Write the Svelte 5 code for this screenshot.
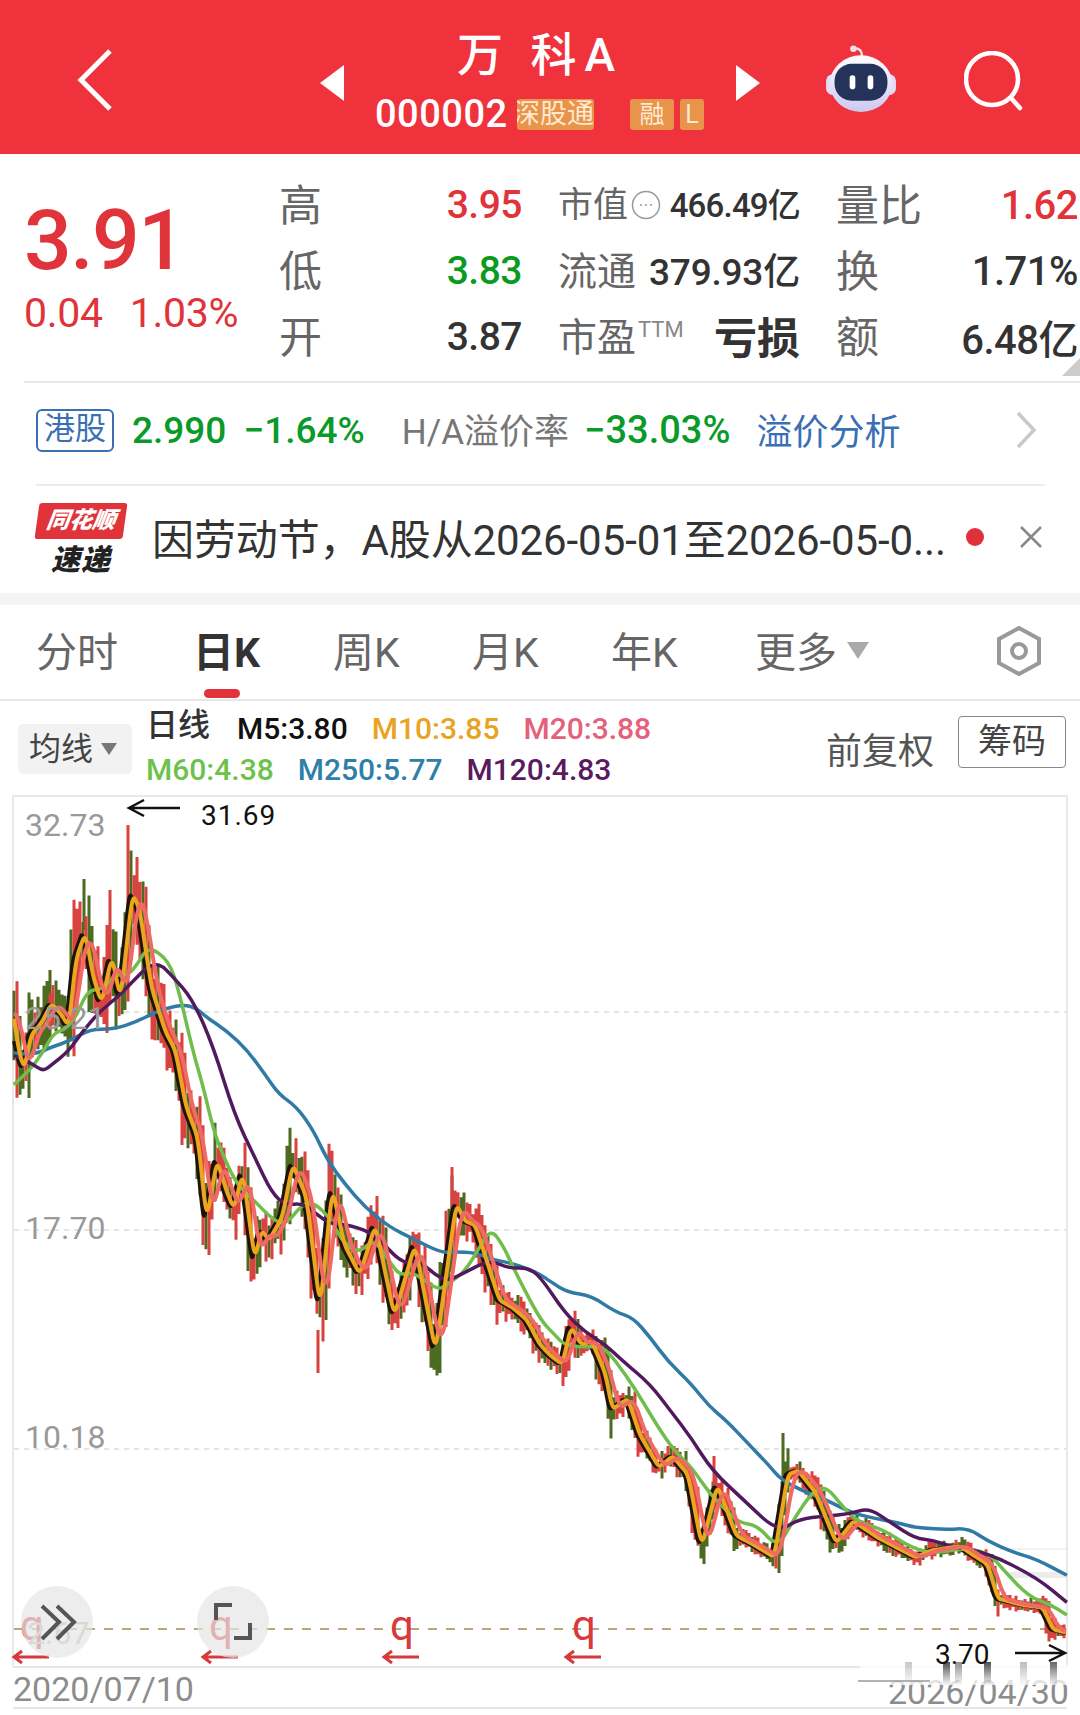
<script>
	// traced from the reference: left half and right half have their own scales
	const left = ([x, y]) => [x / 2.904, 790 + y / 2.529];
	const right = ([x, y]) => [540 + x / 2.904, 1150 + y / 2.775];
	const join = (a, b) => [...a.map(left), ...b.map(right)];

	const blue = join(
		[[40,665],[90,672],[150,650],[210,632],[260,605],[330,605],[400,585],[450,562],[520,543],[565,548],[600,575],[660,610],[720,660],[770,720],[810,770],[860,800],[910,860],[950,935],[1000,995],[1060,1055],[1130,1105],[1200,1135],[1280,1170],[1320,1168],[1380,1170],[1420,1185],[1490,1198],[1530,1210]],
		[[0,345],[30,365],[80,395],[150,405],[220,450],[270,465],[320,520],[370,585],[440,650],[490,710],[540,750],[600,810],[660,870],[700,915],[760,945],[830,970],[900,1005],[960,1020],[1040,1035],[1090,1048],[1180,1053],[1245,1050],[1300,1085],[1370,1115],[1440,1135],[1530,1180]]
	);
	const green = join(
		[[40,745],[80,715],[120,670],[155,615],[190,605],[220,575],[255,505],[300,505],[335,465],[370,470],[400,440],[430,395],[490,430],[520,510],[560,660],[590,750],[620,860],[650,930],[690,1000],[740,1040],[790,1085],[830,1100],[880,1045],[915,1045],[960,1085],[1000,1150],[1045,1170],[1085,1135],[1130,1190],[1160,1228],[1200,1218],[1270,1265],[1300,1250],[1350,1218],[1390,1160],[1425,1110],[1460,1150],[1500,1225]],
		[[0,470],[40,510],[75,545],[150,545],[190,550],[250,625],[300,700],[340,765],[390,835],[440,880],[490,950],[540,1000],[580,1035],[630,1040],[690,1105],[740,1020],[790,950],[830,932],[880,990],[920,1030],[1000,1055],[1080,1105],[1150,1120],[1220,1105],[1300,1115],[1350,1170],[1420,1240],[1480,1260],[1530,1290]]
	);
	const purple = join(
		[[40,672],[90,690],[125,712],[150,695],[200,660],[240,610],[290,560],[340,525],[390,480],[430,445],[465,440],[500,470],[560,530],[620,650],[680,820],[740,930],[790,1020],[830,1050],[880,1045],[930,1080],[960,1097],[1020,1100],[1090,1125],[1170,1200],[1210,1185],[1290,1245],[1340,1225],[1420,1188],[1480,1210],[1530,1208]],
		[[0,350],[70,450],[130,505],[190,540],[240,585],[320,650],[380,725],[440,800],[500,890],[590,970],[690,1060],[750,1025],[830,1015],[900,1010],[955,993],[1020,1035],[1090,1078],[1140,1082],[1190,1100],[1300,1118],[1440,1185],[1530,1255]]
	);
	const price = join(
		[[40,560],[50,640],[70,710],[90,620],[120,590],[150,540],[180,570],[200,600],[220,430],[248,360],[270,470],[295,540],[325,420],[350,530],[385,260],[405,300],[440,500],[480,610],[510,660],[540,800],[575,880],[600,1090],[630,935],[660,1020],[680,1060],[705,965],[740,1190],[760,1110],[780,1140],[820,1080],[850,945],[890,1030],[930,1310],[965,1005],[1000,1150],[1045,1225],[1090,1100],[1145,1330],[1205,1150],[1265,1420],[1325,1045],[1350,1090],[1380,1100],[1450,1290],[1490,1310],[1530,1340]],
		[[0,540],[30,570],[65,595],[90,490],[120,540],[150,530],[190,620],[210,720],[255,690],[290,790],[345,880],[385,850],[430,900],[470,1100],[515,930],[570,1070],[620,1095],[680,1130],[720,900],[750,890],[800,950],[860,1090],[910,1030],[980,1075],[1090,1130],[1140,1110],[1220,1100],[1300,1150],[1330,1245],[1400,1262],[1460,1270],[1490,1330],[1530,1340]]
	);

	const smooth = (pts) => {
		let d = `M${pts[0][0].toFixed(1)} ${pts[0][1].toFixed(1)}`;
		for (let i = 1; i < pts.length - 1; i++) {
			const mx = (pts[i][0] + pts[i + 1][0]) / 2;
			const my = (pts[i][1] + pts[i + 1][1]) / 2;
			d += `Q${pts[i][0].toFixed(1)} ${pts[i][1].toFixed(1)} ${mx.toFixed(1)} ${my.toFixed(1)}`;
		}
		const end = pts[pts.length - 1];
		return d + `L${end[0].toFixed(1)} ${end[1].toFixed(1)}`;
	};

	// price y for every pixel column
	const series = [];
	for (let x = 14, i = 0; x <= 1066; x++) {
		while (i < price.length - 2 && price[i + 1][0] < x) i++;
		const [x0, y0] = price[i];
		const [x1, y1] = price[i + 1];
		series.push([x, y0 + ((y1 - y0) * (x - x0)) / (x1 - x0 || 1)]);
	}
	const at = (i) => series[Math.max(0, Math.min(series.length - 1, i))][1];
	const average = (lag, size) => {
		const out = [];
		for (let i = 0; i < series.length; i += 2) {
			let sum = 0;
			for (let k = -size; k <= size; k++) sum += at(i - lag + k);
			out.push([series[i][0], sum / (size * 2 + 1)]);
		}
		return out;
	};
	const m5 = smooth(average(-3, 0));
	const m10 = smooth(average(0, 2));
	const m20 = smooth(average(6, 5));

	const noise = (n) => {
		const v = Math.sin(n * 127.1) * 43758.5453;
		return v - Math.floor(v);
	};
	let redBars = '';
	let greenBars = '';
	for (let i = 0; i < series.length; i += 3) {
		const [x, y] = series[i];
		const slope = Math.abs(at(i + 3) - at(i - 3));
		const amp = 5 + Math.max(0, 1500 - y) / 45 + slope * 0.8;
		const up = amp * (0.6 + noise(i) * 0.9);
		const down = amp * (0.6 + noise(i + 0.5) * 0.9);
		const bar = `M${x} ${(y - up).toFixed(1)}V${(y + down).toFixed(1)}`;
		if (noise(i + 0.25) > 0.4) redBars += bar;
		else greenBars += bar;
	}
	// the tall wicks that stand out in the picture
	const redSpikes = [[128,825,900],[137,857,930],[110,890,960],[318,1330,1373],[452,1167,1240],[714,1456,1510]];
	const greenSpikes = [[84,879,930],[783,1433,1490],[50,970,1040]];
	for (const [x, a, b] of redSpikes) redBars += `M${x} ${a}V${b}`;
	for (const [x, a, b] of greenSpikes) greenBars += `M${x} ${a}V${b}`;

	const lines = [
		{ d: smooth(blue), color: '#2f7ba6', width: 3.5 },
		{ d: smooth(green), color: '#6fbe4b', width: 3.5 },
		{ d: smooth(purple), color: '#521a5e', width: 3.5 }
	];

	const scale = [
		{ text: '32.73', y: 836 },
		{ text: '25.21', y: 1029 },
		{ text: '17.70', y: 1239 },
		{ text: '10.18', y: 1448 }
	];
	const gridY = [1012, 1230, 1449];
	const marks = [13, 202, 383, 565];
	const streaks = [[943, 0.8], [955, 0.5], [984, 0.8], [1050, 0.7], [905, 0.25], [1020, 0.3]];

	const quotes = [
		{ k: '高', v: '3.95', tone: 'up', mid: '市值', midV: '466.49亿', coin: true, r: '量比', rv: '1.62', rtone: 'up' },
		{ k: '低', v: '3.83', tone: 'down', mid: '流通', midV: '379.93亿', r: '换', rv: '1.71%' },
		{ k: '开', v: '3.87', tone: '', mid: '市盈', midV: '亏损', ttm: true, r: '额', rv: '6.48亿' }
	];
	const tabs = ['分时', '日K', '周K', '月K', '年K'];
</script>

<div class="page">
	<header class="top">
		<svg class="back" viewBox="0 0 36 64"><path d="M33 3 4 32l29 29" /></svg>
		<div class="title-wrap">
			<i class="tri tri-l"></i>
			<div class="title">
				<div class="name">万 科A</div>
				<div class="code-row">
					<span class="code">000002</span>
					<span class="tag tag-clip"><span>深股通</span></span>
					<span class="tag tag-rong">融</span>
					<span class="tag tag-l">L</span>
				</div>
			</div>
			<i class="tri tri-r"></i>
		</div>
		<svg class="robot" viewBox="0 0 76 72">
			<defs>
				<linearGradient id="shell" x1="0" y1="0" x2="0" y2="1">
					<stop offset="0" stop-color="#fff" />
					<stop offset="1" stop-color="#cdc8f2" />
				</linearGradient>
			</defs>
			<circle cx="30" cy="5" r="3.500" fill="#f6dfe6" />
			<path d="M30 5c5-1 9 1 9 8" fill="none" stroke="#f6dfe6" stroke-width="2.500" />
			<rect x="1" y="32" width="74" height="22" rx="7" fill="#e3dcf5" />
			<ellipse cx="38" cy="42" rx="33" ry="30" fill="url(#shell)" />
			<rect x="10" y="21" width="56" height="39" rx="18" fill="#25325a" />
			<rect x="26" y="33" width="6" height="15" rx="3" fill="#fff" />
			<rect x="45" y="33" width="6" height="15" rx="3" fill="#fff" />
		</svg>
		<svg class="search" viewBox="0 0 60 60"><circle cx="28" cy="28" r="26" /><path d="M47 47l9 10" /></svg>
	</header>

	<section class="quote">
		<div class="last">
			<div class="last-num">3.91</div>
			<div class="last-chg"><span>0.04</span><span>1.03%</span></div>
		</div>
		<div class="grid">
			{#each quotes as row}
				<span class="k">{row.k}</span>
				<span class="v {row.tone}">{row.v}</span>
				<span class="mid">
					<span class="mk" class:small={row.coin}>{row.mid}</span>
					{#if row.coin}
						<svg class="coin" viewBox="0 0 30 30"><circle cx="15" cy="15" r="13.500" /><path d="M9 15h2M14 15h2M19 15h2" /></svg>
					{/if}
					{#if row.ttm}<sup>TTM</sup>{/if}
					<span class="mv" class:loss={row.ttm} class:tight={row.coin}>{row.midV}</span>
				</span>
				<span class="k">{row.r}</span>
				<span class="v r {row.rtone || ''}">{row.rv}</span>
			{/each}
		</div>
		<i class="corner"></i>
	</section>

	<section class="hk">
		<span class="hk-tag">港股</span>
		<span class="hk-num">2.990</span>
		<span class="hk-num hk-pct">−1.64%</span>
		<span class="hk-rate">H/A溢价率</span>
		<span class="hk-num hk-prem">−33.03%</span>
		<span class="hk-link">溢价分析</span>
		<svg class="hk-more" viewBox="0 0 22 40"><path d="M3 3l16 17L3 37" /></svg>
	</section>

	<section class="news">
		<div class="logo">
			<div class="logo-top">同花顺</div>
			<div class="logo-bottom">速递</div>
		</div>
		<div class="news-text">因劳动节，A股从2026-05-01至2026-05-0...</div>
		<i class="dot"></i>
		<svg class="close" viewBox="0 0 24 24"><path d="M2 2l20 20M22 2 2 22" /></svg>
	</section>

	<nav class="tabs">
		{#each tabs as tab, i}
			<span class="tab" class:active={i === 1}>{tab}</span>
		{/each}
		<span class="tab more">更多<i class="caret"></i></span>
		<svg class="hex" viewBox="0 0 48 52"><path d="M24 3 44 14v24L24 49 4 38V14z" /><circle cx="24" cy="26" r="7" /></svg>
	</nav>

	<section class="legend">
		<div class="ma-btn">均线<i class="caret small"></i></div>
		<div class="ma">
			<div class="ma-row">
				<span class="ma-name">日线</span>
				<span class="c-m5">M5:3.80</span>
				<span class="c-m10">M10:3.85</span>
				<span class="c-m20">M20:3.88</span>
			</div>
			<div class="ma-row second">
				<span class="c-m60">M60:4.38</span>
				<span class="c-m250">M250:5.77</span>
				<span class="c-m120">M120:4.83</span>
			</div>
		</div>
		<span class="adjust">前复权</span>
		<span class="chips">筹码</span>
	</section>

	<section class="chart">
		<svg class="plot" viewBox="0 795 1080 920">
			<defs>
				<linearGradient id="streak" x1="0" y1="0" x2="0" y2="1">
					<stop offset="0" stop-color="#222" />
					<stop offset="1" stop-color="#222" stop-opacity="0" />
				</linearGradient>
			</defs>
			<path d="M13 1667V796H1067V1667" fill="none" stroke="#e8e8e8" stroke-width="2" />
			<path d="M13 1667H1067M13 1708H1067" fill="none" stroke="#e6e6e6" stroke-width="2" />
			{#each gridY as y}
				<line x1="14" x2="1066" y1={y} y2={y} class="grid-line" />
			{/each}
			<path d="M1000 1549H1066" stroke="#e6e6e6" stroke-width="1" />
			<path d="M1008 1575H1066" stroke="#ececec" stroke-width="6" />
			<line x1="14" x2="1066" y1="1629" y2="1629" class="last-line" />

			<path d={greenBars} stroke="#4c6b20" stroke-width="3" fill="none" />
			<path d={redBars} stroke="#d9433f" stroke-width="3" fill="none" />
			<path d={m5} stroke="#1c1408" stroke-width="4" fill="none" />
			{#each lines as line}
				<path d={line.d} stroke={line.color} stroke-width={line.width} fill="none" stroke-linejoin="round" />
			{/each}
			<path d={m10} stroke="#eca51f" stroke-width="4" fill="none" stroke-linejoin="round" />
			<path d={m20} stroke="#ef6a63" stroke-width="4" fill="none" stroke-linejoin="round" />

			{#each scale as s}
				<text x="25" y={s.y} class="axis">{s.text}</text>
			{/each}

			<path d="M180 808H129M144 800l-15 8 15 8" class="arrow" />
			<text x="201" y="825" class="note">31.69</text>

			<text x="13" y="1701" class="date">2020/07/10</text>
			<text x="888" y="1704" class="date">2026/04/30</text>
			<rect x="860" y="1665" width="210" height="20" class="smear" />
			{#each streaks as [x, o]}
				<rect x={x} y="1662" width="7" height="24" fill="url(#streak)" opacity={o} />
			{/each}
			<path d="M858 1681H930" stroke="#999" stroke-width="1.500" />
			<text x="935" y="1664" class="note tight">3.70</text>
			<path d="M1015 1653H1065M1049 1645l16 8-16 8" class="arrow" />

			{#each marks as x}
				<text x={x + 7} y="1640" class="flag">q</text>
				<path d="M{x + 36} 1657H{x + 1}M{x + 9} 1651l-8 6 8 6" class="flag-arrow" />
			{/each}
			<text x="27" y="1644" class="axis faded">2.67</text>

			<circle cx="57" cy="1622" r="36" class="round" />
			<path d="M42 1606l17 16-17 17M57 1606l17 16-17 17" class="round-icon" />
			<circle cx="233" cy="1622" r="36" class="round" />
			<path d="M216 1620v-15h16M250 1623v15h-16" class="round-icon" />
		</svg>
	</section>
</div>

<style>
	:global(body) {
		margin: 0;
		background: #fff;
	}

	.page {
		width: 1080px;
		height: 1715px;
		overflow: hidden;
		font-family: Roboto, "Noto Sans CJK SC", sans-serif;
		color: #333;
		background: #fff;
	}

	.top {
		height: 154px;
		background: #f0323c;
		display: flex;
		align-items: center;
		color: #fff;
	}
	.back {
		width: 36px;
		height: 64px;
		margin: 6px 0 0 77px;
		flex-shrink: 0;
	}
	.back path {
		fill: none;
		stroke: #fff;
		stroke-width: 5;
	}
	.title-wrap {
		width: 440px;
		margin-left: 208px;
		display: flex;
		align-items: center;
		justify-content: space-between;
		flex-shrink: 0;
		position: relative;
		left: -1px;
	}
	.tri {
		width: 0;
		height: 0;
		border-top: 18px solid transparent;
		border-bottom: 18px solid transparent;
		margin-top: 12px;
	}
	.tri-l {
		border-right: 24px solid #fff;
	}
	.tri-r {
		border-left: 24px solid #fff;
	}
	.title {
		display: flex;
		flex-direction: column;
		align-items: center;
		width: 340px;
	}
	.name {
		font-size: 46px;
		line-height: 50px;
		padding: 13px 0 0 0;
		font-weight: 500;
		white-space: pre;
		letter-spacing: 8px;
		margin-bottom: -2px;
	}
	.code-row {
		display: flex;
		align-items: center;
		height: 46px;
		margin-top: 13px;
		align-self: flex-start;
		padding-left: 5px;
	}
	.code {
		font-size: 38px;
		font-weight: 500;
		width: 142px;
		letter-spacing: 0.5px;
	}
	.tag {
		height: 31px;
		line-height: 31px;
		background: #e8944a;
		color: #ffe9d2;
		font-size: 25px;
		text-align: center;
		border-radius: 3px;
	}
	.tag-clip {
		width: 77px;
		font-size: 27px;
		overflow: hidden;
		direction: rtl;
		white-space: nowrap;
		text-align: left;
	}
	.tag-rong {
		width: 44px;
		margin-left: 36px;
	}
	.tag-l {
		width: 24px;
		margin-left: 6px;
	}
	.robot {
		width: 72px;
		height: 68px;
		margin: 2px 0 0 64px;
		flex-shrink: 0;
	}
	.search {
		width: 60px;
		height: 60px;
		margin: 8px 0 0 67px;
		flex-shrink: 0;
	}
	.search circle,
	.search path {
		fill: none;
		stroke: #fff;
		stroke-width: 4.500;
		stroke-linecap: round;
	}

	.quote {
		height: 227px;
		margin-left: 24px;
		border-bottom: 2px solid #e8e8e8;
		display: flex;
		position: relative;
	}
	.last {
		width: 257px;
		color: #e0333a;
		padding-top: 43px;
	}
	.last-num {
		font-size: 84px;
		line-height: 88px;
		font-weight: 500;
		letter-spacing: -1.5px;
	}
	.last-chg {
		display: flex;
		gap: 27px;
		font-size: 41px;
		line-height: 48px;
		margin-top: 4px;
		letter-spacing: -0.3px;
	}
	.grid {
		display: grid;
		grid-template-columns: 60px 181px 316px 60px 182px;
		grid-auto-rows: 66px;
		align-items: center;
		padding-top: 18px;
		width: 799px;
		white-space: nowrap;
	}
	.k {
		font-size: 43px;
		color: #666;
		margin: -7px 0 0 -2px;
	}
	.v {
		font-size: 39px;
		text-align: right;
		color: #333;
		font-weight: 500;
		letter-spacing: -0.5px;
	}
	.v.r {
		font-size: 40px;
		margin-right: 2px;
	}
	.v.up {
		color: #e0333a;
	}
	.v.down {
		color: #0a9a1e;
	}
	.mid {
		display: flex;
		align-items: center;
		margin: 0 38px 0 36px;
		position: relative;
	}
	.mk {
		font-size: 39px;
		color: #666;
		margin-top: -7px;
	}
	.mk.small {
		font-size: 35px;
	}
	.mid sup {
		font-size: 22px;
		color: #888;
		margin: -14px 0 0 2px;
		line-height: 1;
	}
	.coin {
		width: 30px;
		height: 30px;
		margin-left: 3px;
	}
	.coin circle,
	.coin path {
		fill: none;
		stroke: #999;
		stroke-width: 1.500;
	}
	.mv {
		margin-left: auto;
		font-size: 37px;
		color: #333;
		font-weight: 500;
		letter-spacing: -0.2px;
		margin-top: -4px;
	}
	.mv.tight {
		font-size: 33px;
		letter-spacing: -0.8px;
	}
	.mv.loss {
		font-size: 43px;
		font-weight: 700;
		letter-spacing: 0;
	}
	.corner {
		position: absolute;
		right: 0;
		bottom: 5px;
		width: 0;
		height: 0;
		border-left: 18px solid transparent;
		border-bottom: 18px solid #ccc;
	}

	.hk {
		height: 101px;
		margin: 0 35px 0 36px;
		border-bottom: 2px solid #ececec;
		display: flex;
		align-items: center;
		white-space: nowrap;
		position: relative;
	}
	.hk-tag {
		width: 74px;
		height: 39px;
		line-height: 36px;
		text-align: center;
		border: 2px solid #3a6fb5;
		border-radius: 6px;
		color: #3a6fb5;
		font-size: 31px;
		margin-top: -6px;
	}
	.hk-num {
		font-size: 37px;
		font-weight: 500;
		color: #0a9a2a;
		margin: -7px 0 0 18px;
	}
	.hk-pct {
		margin-left: 17px;
	}
	.hk-rate {
		font-size: 35px;
		color: #777;
		margin: -10px 0 0 37px;
	}
	.hk-prem {
		margin-left: 15px;
		font-size: 38px;
	}
	.hk-link {
		font-size: 36px;
		color: #3a6fb5;
		margin: -10px 0 0 26px;
	}
	.hk-more {
		width: 22px;
		height: 40px;
		margin-left: auto;
		margin-right: 8px;
		margin-top: -8px;
	}
	.hk-more path {
		fill: none;
		stroke: #c9c9c9;
		stroke-width: 3.500;
	}

	.news {
		height: 107px;
		border-bottom: 12px solid #f4f4f4;
		display: flex;
		align-items: center;
		white-space: nowrap;
	}
	.logo {
		width: 88px;
		margin-left: 37px;
		text-align: center;
		font-style: italic;
		font-weight: 900;
	}
	.logo-top {
		background: #e0333a;
		color: #fff;
		font-size: 23px;
		line-height: 36px;
		height: 36px;
		border-radius: 3px;
		transform: skewX(-8deg);
	}
	.logo-bottom {
		color: #222;
		font-size: 29px;
		line-height: 34px;
		margin-top: 4px;
		letter-spacing: 1px;
	}
	.news-text {
		font-size: 42px;
		color: #333;
		margin: -7px 0 0 27px;
		width: 798px;
		letter-spacing: -0.1px;
	}
	.dot {
		width: 18px;
		height: 18px;
		border-radius: 50%;
		background: #e0303a;
		margin: -6px 0 0 16px;
	}
	.close {
		width: 24px;
		height: 24px;
		margin: -6px 0 0 35px;
	}
	.close path {
		fill: none;
		stroke: #888;
		stroke-width: 2.500;
	}

	.tabs {
		height: 96px;
		border-bottom: 2px solid #e8e8e8;
		box-sizing: border-box;
		display: flex;
		align-items: center;
		position: relative;
		padding-left: 36px;
		white-space: nowrap;
	}
	.tab {
		font-size: 41px;
		color: #666;
		width: 139px;
		flex-shrink: 0;
		margin-top: -6px;
	}
	.tab:first-child {
		width: 157px;
	}
	.tab.active {
		color: #333;
		font-weight: 700;
		position: relative;
		width: 140px;
	}
	.tab.active::after {
		content: "";
		position: absolute;
		left: 11px;
		bottom: -19px;
		width: 36px;
		height: 9px;
		border-radius: 5px;
		background: #e0333a;
	}
	.more {
		display: flex;
		align-items: center;
		margin-left: 5px;
		width: 200px;
	}
	.caret {
		width: 0;
		height: 0;
		border-left: 11px solid transparent;
		border-right: 11px solid transparent;
		border-top: 17px solid #aaa;
		margin: 2px 0 0 10px;
	}
	.caret.small {
		border-left-width: 8px;
		border-right-width: 8px;
		border-top: 12px solid #777;
		margin: 0 0 0 8px;
	}
	.hex {
		width: 48px;
		height: 52px;
		position: absolute;
		left: 995px;
		top: 20px;
	}
	.hex path,
	.hex circle {
		fill: none;
		stroke: #999;
		stroke-width: 4;
	}

	.legend {
		height: 94px;
		display: flex;
		align-items: center;
		white-space: nowrap;
		padding-left: 18px;
	}
	.ma-btn {
		width: 114px;
		height: 50px;
		box-sizing: border-box;
		padding-left: 11px;
		background: #f2f2f2;
		border-radius: 5px;
		font-size: 32px;
		line-height: 46px;
		color: #444;
		display: flex;
		align-items: center;
		margin-top: 2px;
	}
	.ma {
		margin: 2px 0 0 14px;
		width: 682px;
		font-size: 30px;
		line-height: 41px;
		font-weight: 500;
	}
	.ma-row {
		display: flex;
		gap: 24px;
		align-items: center;
	}
	.ma-name {
		font-size: 32px;
		color: #333;
		margin: -6px 3px 0 0;
	}
	.c-m5 { color: #111; }
	.c-m10 { color: #e8a320; }
	.c-m20 { color: #e5607a; }
	.c-m60 { color: #6cc24a; }
	.c-m250 { color: #2f7fa8; }
	.c-m120 { color: #5a1a5e; }
	.adjust {
		font-size: 36px;
		color: #555;
		margin-left: -2px;
		width: 132px;
	}
	.chips {
		width: 108px;
		height: 52px;
		line-height: 48px;
		box-sizing: border-box;
		border: 1.500px solid #888;
		border-radius: 4px;
		text-align: center;
		font-size: 34px;
		color: #444;
		margin-top: -12px;
	}

	.chart {
		height: 920px;
		position: relative;
	}
	.plot {
		position: absolute;
		left: 0;
		top: 0;
		width: 1080px;
		height: 920px;
	}
	.grid-line {
		stroke: #ddd;
		stroke-width: 1.500;
		stroke-dasharray: 5 5;
	}
	.last-line {
		stroke: #b9a679;
		stroke-width: 2;
		stroke-dasharray: 9 9;
	}
	.axis {
		font-size: 32px;
		fill: #999;
	}
	.axis.faded {
		fill: #bbb;
	}
	.note {
		font-size: 28px;
		fill: #111;
		letter-spacing: 1px;
	}
	.note.tight {
		letter-spacing: 0;
	}
	.date {
		font-size: 34px;
		fill: #8c8c8c;
	}
	.smear {
		fill: #fff;
		opacity: 0.75;
	}
	.arrow {
		fill: none;
		stroke: #111;
		stroke-width: 2.500;
	}
	.flag {
		font-size: 42px;
		fill: #d8393c;
	}
	.flag-arrow {
		fill: none;
		stroke: #d8393c;
		stroke-width: 3;
	}
	.round {
		fill: #e6e6e6;
		opacity: 0.7;
	}
	.round-icon {
		fill: none;
		stroke: #555;
		stroke-width: 4;
	}
</style>
